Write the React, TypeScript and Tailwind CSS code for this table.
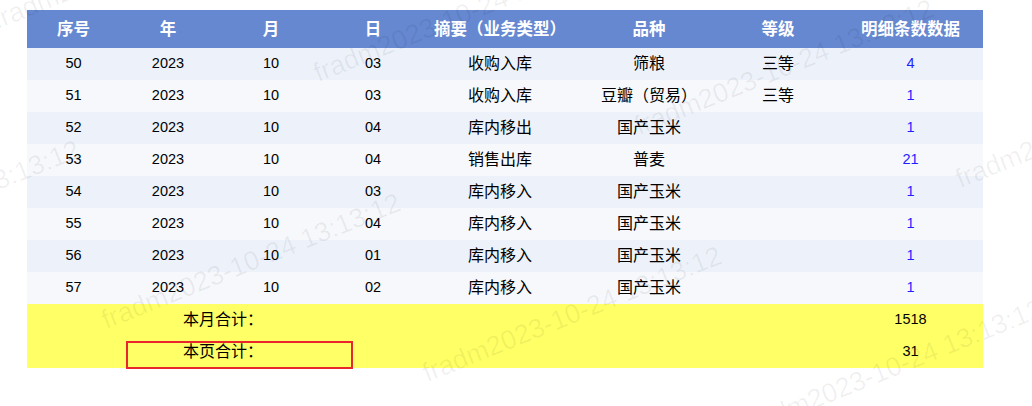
import React from 'react';

type Row = {
  no: string;
  year: string;
  month: string;
  day: string;
  summary: string;
  variety: string;
  grade: string;
  count: string;
};

const rows: Row[] = [
  { no: '50', year: '2023', month: '10', day: '03', summary: '收购入库', variety: '筛粮', grade: '三等', count: '4' },
  { no: '51', year: '2023', month: '10', day: '03', summary: '收购入库', variety: '豆瓣（贸易）', grade: '三等', count: '1' },
  { no: '52', year: '2023', month: '10', day: '04', summary: '库内移出', variety: '国产玉米', grade: '', count: '1' },
  { no: '53', year: '2023', month: '10', day: '04', summary: '销售出库', variety: '普麦', grade: '', count: '21' },
  { no: '54', year: '2023', month: '10', day: '03', summary: '库内移入', variety: '国产玉米', grade: '', count: '1' },
  { no: '55', year: '2023', month: '10', day: '04', summary: '库内移入', variety: '国产玉米', grade: '', count: '1' },
  { no: '56', year: '2023', month: '10', day: '01', summary: '库内移入', variety: '国产玉米', grade: '', count: '1' },
  { no: '57', year: '2023', month: '10', day: '02', summary: '库内移入', variety: '国产玉米', grade: '', count: '1' },
];

const headers = ['序号', '年', '月', '日', '摘要（业务类型）', '品种', '等级', '明细条数数据'];

// watermark tiles: start point of each text line
const marks: { x: number; y: number }[] = [];
for (let i = -1; i <= 2; i++) {
  for (let j = 0; j <= 1; j++) {
    marks.push({ x: 320 + 321 * i - 212 * j, y: 84 + 53 * i + 247 * j });
  }
}

const font = { fontFamily: '"Liberation Sans", "Noto Sans CJK SC", sans-serif' };

export default function App() {
  return (
    <div className="relative h-[406px] w-[1032px] overflow-hidden bg-white" style={font}>
      <div className="pl-[27px] pt-[10px]">
        <table className="w-[956px] table-fixed border-collapse text-black">
          <colgroup>
            <col className="w-[93px]" />
            <col className="w-[96px]" />
            <col className="w-[110px]" />
            <col className="w-[94px]" />
            <col className="w-[160px]" />
            <col className="w-[138px]" />
            <col className="w-[120px]" />
            <col className="w-[145px]" />
          </colgroup>
          <thead>
            <tr className="h-[38px] bg-[#6688d1]">
              {headers.map((h) => (
                <th key={h} className="p-0 text-center text-[16.5px] font-bold text-white">
                  {h}
                </th>
              ))}
            </tr>
          </thead>
          <tbody>
            {rows.map((r, idx) => (
              <tr key={r.no} className={idx % 2 === 0 ? 'h-8 bg-[#edf2fa]' : 'h-8 bg-[#f6f8fc]'}>
                <td className="p-0 text-center text-[14.5px]">{r.no}</td>
                <td className="p-0 text-center text-[14.5px]">{r.year}</td>
                <td className="p-0 text-center text-[14.5px]">{r.month}</td>
                <td className="p-0 text-center text-[14.5px]">{r.day}</td>
                <td className="p-0 text-center text-[16px]">{r.summary}</td>
                <td className="p-0 text-center text-[16px]">{r.variety}</td>
                <td className="p-0 text-center text-[16px]">{r.grade}</td>
                <td className="p-0 text-center text-[14.5px] text-[#1f1fff]">{r.count}</td>
              </tr>
            ))}
            <tr className="h-8 bg-[#ffff66]">
              <td className="p-0" />
              <td colSpan={2} className="p-0 text-center text-[16px]">
                本月合计：
              </td>
              <td colSpan={4} className="p-0" />
              <td className="p-0 text-center text-[14.5px]">1518</td>
            </tr>
            <tr className="h-8 bg-[#ffff66]">
              <td className="p-0" />
              <td colSpan={2} className="p-0 text-center text-[16px]">
                本页合计：
              </td>
              <td colSpan={4} className="p-0" />
              <td className="p-0 text-center text-[14.5px]">31</td>
            </tr>
          </tbody>
        </table>
      </div>

      {/* annotation box */}
      <div className="pointer-events-none absolute left-[126px] top-[341px] h-[28px] w-[227px] border-2 border-[#e8262b]" />

      {/* watermark */}
      {marks.map((m) => (
        <span
          key={`${m.x}-${m.y}`}
          className="pointer-events-none absolute origin-bottom-left -rotate-[22deg] whitespace-nowrap text-[27px] leading-none text-black/[0.06]"
          style={{ left: m.x, top: m.y - 24 }}
        >
          fradm2023-10-24 13:13:12
        </span>
      ))}
    </div>
  );
}
